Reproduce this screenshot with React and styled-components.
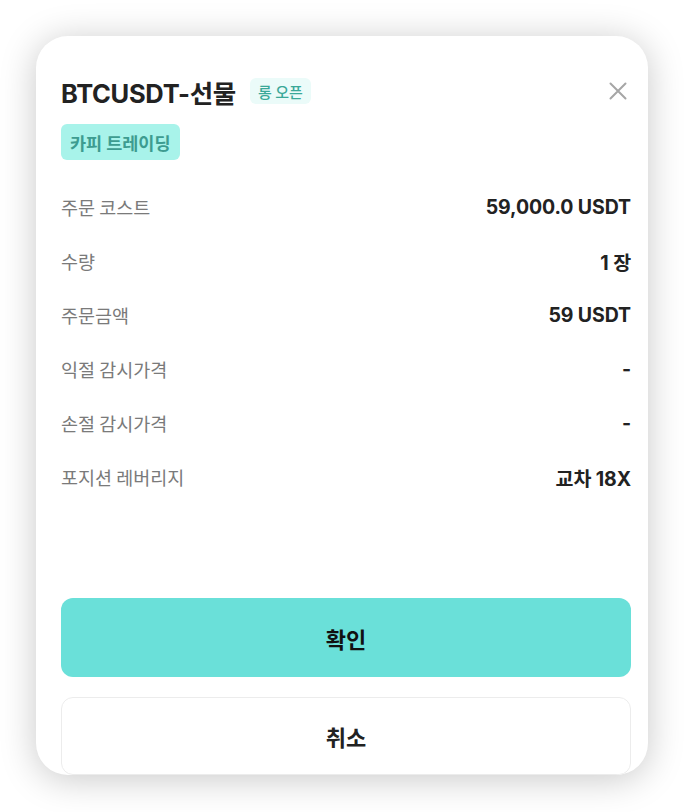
import React from "react";
import styled, { createGlobalStyle } from "styled-components";

const Global = createGlobalStyle`
  html, body { margin: 0; padding: 0; background: #ffffff; }
  body { font-family: "Inter", "Noto Sans CJK KR", sans-serif; }
  * { box-sizing: border-box; }
`;

const Page = styled.div`
  width: 684px;
  height: 812px;
  padding: 36px 36px 0 36px;
  background: #ffffff;
`;

const Card = styled.div`
  width: 612px;
  height: 739px;
  background: #ffffff;
  border-radius: 32px;
  box-shadow: 0 4px 36px rgba(0, 0, 0, 0.22);
  overflow: hidden;
  display: flex;
  flex-direction: column;
  padding: 38px 17px 0 25px;
`;

const Header = styled.div`
  display: flex;
  align-items: center;
  height: 34px;
`;

const Title = styled.h1`
  margin: 0;
  font-family: "Inter", "Noto Sans CJK KR", sans-serif;
  font-size: 25.5px;
  font-weight: 700;
  color: #222222;
  letter-spacing: -0.3px;
`;

const Tag = styled.span`
  display: inline-flex;
  align-items: center;
  justify-content: center;
  font-family: "Noto Sans CJK KR", sans-serif;
  border-radius: 6px;
  background: ${(p) => (p.$big ? "#a8f3ea" : "#ebfbf9")};
  color: ${(p) => (p.$big ? "#3d9c90" : "#3aa898")};
  font-size: ${(p) => (p.$big ? "17.5px" : "15px")};
  font-weight: ${(p) => (p.$big ? 700 : 500)};
  height: ${(p) => (p.$big ? "36px" : "26px")};
  padding: ${(p) => (p.$big ? "0 9px" : "0 8px")};
`;

const TitleTag = styled(Tag)`
  margin-left: 14px;
`;

const Close = styled.button`
  margin-left: auto;
  margin-right: 3px;
  width: 20px;
  height: 20px;
  padding: 0;
  border: none;
  background: transparent;
  display: flex;
  align-items: center;
  justify-content: center;
  cursor: pointer;
`;

const CopyRow = styled.div`
  display: flex;
  margin-top: 16px;
`;

const List = styled.div`
  display: flex;
  flex-direction: column;
  margin-top: 20px;
`;

const Row = styled.div`
  display: flex;
  align-items: center;
  justify-content: space-between;
  height: 54px;
`;

const Label = styled.span`
  font-family: "Noto Sans CJK KR", sans-serif;
  font-size: 18.5px;
  color: #7a7a7a;
  font-weight: 400;
`;

const Value = styled.span`
  font-family: "Inter", "Noto Sans CJK KR", sans-serif;
  font-size: 19.5px;
  color: #222222;
  font-weight: 700;
  letter-spacing: -0.1px;
`;

const Actions = styled.div`
  margin-top: auto;
  display: flex;
  flex-direction: column;
  gap: 20px;
`;

const Button = styled.button`
  width: 570px;
  height: ${(p) => (p.$primary ? "79px" : "78px")};
  border-radius: 12px;
  border: ${(p) => (p.$primary ? "none" : "1.5px solid #ececec")};
  background: ${(p) => (p.$primary ? "#6ae0d9" : "#ffffff")};
  color: ${(p) => (p.$primary ? "#111111" : "#222222")};
  font-family: "Noto Sans CJK KR", sans-serif;
  font-size: 22px;
  font-weight: 700;
  cursor: pointer;
`;

const rows = [
  ["주문 코스트", "59,000.0 USDT"],
  ["수량", "1 장"],
  ["주문금액", "59 USDT"],
  ["익절 감시가격", "-"],
  ["손절 감시가격", "-"],
  ["포지션 레버리지", "교차 18X"],
];

export default function App() {
  return (
    <>
      <Global />
      <Page>
        <Card>
          <Header>
            <Title>BTCUSDT-선물</Title>
            <TitleTag>롱 오픈</TitleTag>
            <Close aria-label="close">
              <svg width="18" height="18" viewBox="0 0 18 18">
                <path d="M1.5 1.5 L16.5 16.5 M16.5 1.5 L1.5 16.5" stroke="#a6a6a6" strokeWidth="2" strokeLinecap="round" />
              </svg>
            </Close>
          </Header>
          <CopyRow>
            <Tag $big>카피 트레이딩</Tag>
          </CopyRow>
          <List>
            {rows.map(([l, v]) => (
              <Row key={l}>
                <Label>{l}</Label>
                <Value>{v}</Value>
              </Row>
            ))}
          </List>
          <Actions>
            <Button $primary>확인</Button>
            <Button>취소</Button>
          </Actions>
        </Card>
      </Page>
    </>
  );
}
